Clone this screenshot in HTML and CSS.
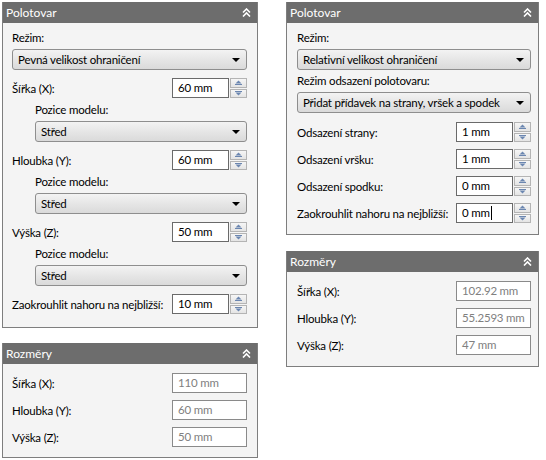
FILE: index.html
```html
<!DOCTYPE html>
<html lang="cs">
<head>
<meta charset="utf-8">
<link rel="stylesheet" href="styles.css">
</head>
<body>
<div class="page">
  <div class="col col-left">
    <section class="panel">
      <header class="ph"><span>Polotovar</span><svg class="chev" width="9" height="9" viewBox="0 0 9 9"><polyline points="1,4.5 4.5,1 8,4.5" /><polyline points="1,8.5 4.5,5 8,8.5" /></svg></header>
      <div class="pb">
        <div class="lbl">Režim:</div>
        <div class="combo"><span>Pevná velikost ohraničení</span><i class="arr"></i></div>
        <div class="row"><span>Šířka (X):</span><div class="spin"><div class="tb">60 mm</div><div class="btns"><b class="up"><svg width="7" height="5" viewBox="0 0 7 5"><path d="M0.5 3.5 L3.5 0.5 L6.5 3.5 Z"/><rect x="0" y="4" width="7" height="1"/></svg></b><b class="dn"><svg width="7" height="5" viewBox="0 0 7 5"><rect x="0" y="0" width="7" height="1"/><path d="M0.5 1.5 L3.5 4.5 L6.5 1.5 Z"/></svg></b></div></div></div>
        <div class="lbl ind">Pozice modelu:</div>
        <div class="combo ind"><span>Střed</span><i class="arr"></i></div>
        <div class="row"><span>Hloubka (Y):</span><div class="spin"><div class="tb">60 mm</div><div class="btns"><b class="up"><svg width="7" height="5" viewBox="0 0 7 5"><path d="M0.5 3.5 L3.5 0.5 L6.5 3.5 Z"/><rect x="0" y="4" width="7" height="1"/></svg></b><b class="dn"><svg width="7" height="5" viewBox="0 0 7 5"><rect x="0" y="0" width="7" height="1"/><path d="M0.5 1.5 L3.5 4.5 L6.5 1.5 Z"/></svg></b></div></div></div>
        <div class="lbl ind">Pozice modelu:</div>
        <div class="combo ind"><span>Střed</span><i class="arr"></i></div>
        <div class="row"><span>Výška (Z):</span><div class="spin"><div class="tb">50 mm</div><div class="btns"><b class="up"><svg width="7" height="5" viewBox="0 0 7 5"><path d="M0.5 3.5 L3.5 0.5 L6.5 3.5 Z"/><rect x="0" y="4" width="7" height="1"/></svg></b><b class="dn"><svg width="7" height="5" viewBox="0 0 7 5"><rect x="0" y="0" width="7" height="1"/><path d="M0.5 1.5 L3.5 4.5 L6.5 1.5 Z"/></svg></b></div></div></div>
        <div class="lbl ind">Pozice modelu:</div>
        <div class="combo ind"><span>Střed</span><i class="arr"></i></div>
        <div class="row"><span>Zaokrouhlit nahoru na nejbližší:</span><div class="spin"><div class="tb">10 mm</div><div class="btns"><b class="up"><svg width="7" height="5" viewBox="0 0 7 5"><path d="M0.5 3.5 L3.5 0.5 L6.5 3.5 Z"/><rect x="0" y="4" width="7" height="1"/></svg></b><b class="dn"><svg width="7" height="5" viewBox="0 0 7 5"><rect x="0" y="0" width="7" height="1"/><path d="M0.5 1.5 L3.5 4.5 L6.5 1.5 Z"/></svg></b></div></div></div>
      </div>
    </section>
    <section class="panel">
      <header class="ph"><span>Rozměry</span><svg class="chev" width="9" height="9" viewBox="0 0 9 9"><polyline points="1,4.5 4.5,1 8,4.5" /><polyline points="1,8.5 4.5,5 8,8.5" /></svg></header>
      <div class="pb dims">
        <div class="drow"><span>Šířka (X):</span><div class="ro">110 mm</div></div>
        <div class="drow"><span>Hloubka (Y):</span><div class="ro">60 mm</div></div>
        <div class="drow"><span>Výška (Z):</span><div class="ro">50 mm</div></div>
      </div>
    </section>
  </div>
  <div class="col col-right">
    <section class="panel">
      <header class="ph"><span>Polotovar</span><svg class="chev" width="9" height="9" viewBox="0 0 9 9"><polyline points="1,4.5 4.5,1 8,4.5" /><polyline points="1,8.5 4.5,5 8,8.5" /></svg></header>
      <div class="pb pr">
        <div class="lbl">Režim:</div>
        <div class="combo"><span>Relativní velikost ohraničení</span><i class="arr"></i></div>
        <div class="lbl">Režim odsazení polotovaru:</div>
        <div class="combo"><span>Přidat přídavek na strany, vršek a spodek</span><i class="arr"></i></div>
        <div class="row"><span>Odsazení strany:</span><div class="spin"><div class="tb">1 mm</div><div class="btns"><b class="up"><svg width="7" height="5" viewBox="0 0 7 5"><path d="M0.5 3.5 L3.5 0.5 L6.5 3.5 Z"/><rect x="0" y="4" width="7" height="1"/></svg></b><b class="dn"><svg width="7" height="5" viewBox="0 0 7 5"><rect x="0" y="0" width="7" height="1"/><path d="M0.5 1.5 L3.5 4.5 L6.5 1.5 Z"/></svg></b></div></div></div>
        <div class="row"><span>Odsazení vršku:</span><div class="spin"><div class="tb">1 mm</div><div class="btns"><b class="up"><svg width="7" height="5" viewBox="0 0 7 5"><path d="M0.5 3.5 L3.5 0.5 L6.5 3.5 Z"/><rect x="0" y="4" width="7" height="1"/></svg></b><b class="dn"><svg width="7" height="5" viewBox="0 0 7 5"><rect x="0" y="0" width="7" height="1"/><path d="M0.5 1.5 L3.5 4.5 L6.5 1.5 Z"/></svg></b></div></div></div>
        <div class="row"><span>Odsazení spodku:</span><div class="spin"><div class="tb">0 mm</div><div class="btns"><b class="up"><svg width="7" height="5" viewBox="0 0 7 5"><path d="M0.5 3.5 L3.5 0.5 L6.5 3.5 Z"/><rect x="0" y="4" width="7" height="1"/></svg></b><b class="dn"><svg width="7" height="5" viewBox="0 0 7 5"><rect x="0" y="0" width="7" height="1"/><path d="M0.5 1.5 L3.5 4.5 L6.5 1.5 Z"/></svg></b></div></div></div>
        <div class="row"><span>Zaokrouhlit nahoru na nejbližší:</span><div class="spin"><div class="tb focus">0 mm<i class="caret"></i></div><div class="btns"><b class="up"><svg width="7" height="5" viewBox="0 0 7 5"><path d="M0.5 3.5 L3.5 0.5 L6.5 3.5 Z"/><rect x="0" y="4" width="7" height="1"/></svg></b><b class="dn"><svg width="7" height="5" viewBox="0 0 7 5"><rect x="0" y="0" width="7" height="1"/><path d="M0.5 1.5 L3.5 4.5 L6.5 1.5 Z"/></svg></b></div></div></div>
      </div>
    </section>
    <section class="panel">
      <header class="ph"><span>Rozměry</span><svg class="chev" width="9" height="9" viewBox="0 0 9 9"><polyline points="1,4.5 4.5,1 8,4.5" /><polyline points="1,8.5 4.5,5 8,8.5" /></svg></header>
      <div class="pb dims pr">
        <div class="drow"><span>Šířka (X):</span><div class="ro">102.92 mm</div></div>
        <div class="drow"><span>Hloubka (Y):</span><div class="ro">55.2593 mm</div></div>
        <div class="drow"><span>Výška (Z):</span><div class="ro">47 mm</div></div>
      </div>
    </section>
  </div>
</div>
</body>
</html>
```

FILE: styles.css
```css
* { box-sizing: border-box; }
body {
  margin: 0;
  background: #fff;
  color: #000;
  font-family: Lato, "Noto Sans", sans-serif;
  font-size: 11.5px;
  letter-spacing: -0.2px;
  white-space: nowrap;
}
.page {
  display: flex;
  align-items: flex-start;
  gap: 28px;
  padding: 2px 0 0 2px;
}
.col {
  display: flex;
  flex-direction: column;
  gap: 15px;
}
.col-left { width: 256px; }
.col-right { width: 253px; gap: 16px; }
.panel {
  border: 1px solid #7e7e7e;
  border-top: 0;
  background: #f4f4f4;
}
.ph {
  height: 21px;
  background: #6d6d6d;
  color: #fff;
  font-size: 12px;
  letter-spacing: 0;
  display: flex;
  align-items: center;
  justify-content: space-between;
  padding: 0 6px 0 3px;
}
.chev polyline {
  fill: none;
  stroke: #fff;
  stroke-width: 1.6;
}
.pb {
  padding: 4px 10px 13px 9px;
}
.pb.pr { padding-left: 10px; padding-right: 7px; padding-bottom: 11px; }
.lbl {
  height: 22px;
  line-height: 22px;
}
.row + .lbl { margin-top: 1px; }
.ind { margin-left: 23px; }
.combo {
  height: 21px;
  border: 1px solid #8e8e8e;
  border-radius: 3px;
  background: linear-gradient(#f3f3f3, #e6e6e6 50%, #dadada);
  display: flex;
  align-items: center;
  justify-content: space-between;
  padding: 0 6px 0 5px;
}
.arr {
  width: 0;
  height: 0;
  border-left: 4px solid transparent;
  border-right: 4px solid transparent;
  border-top: 4px solid #000;
}
.row {
  display: flex;
  align-items: center;
  justify-content: space-between;
  height: 20px;
  margin-top: 8px;
}
.pr .row { margin-top: 7px; }
.pr .combo + .row { margin-top: 9px; }
.spin {
  display: flex;
  flex-shrink: 0;
  width: 75px;
  height: 20px;
}
.tb {
  width: 57px;
  height: 20px;
  border: 1px solid #6a6a6a;
  background: #fff;
  padding-left: 5px;
  line-height: 18px;
  display: flex;
  align-items: center;
}
.caret {
  width: 1px;
  height: 14px;
  background: #000;
  margin-left: 1px;
}
.btns {
  width: 17px;
  margin-left: 1px;
  display: flex;
  flex-direction: column;
  gap: 1px;
}
.btns b {
  flex: 1;
  border: 1px solid #b4b4b4;
  background: linear-gradient(#f6f6f6, #e4e4e4);
  display: flex;
  align-items: center;
  justify-content: center;
}
.btns svg { fill: #6b86b0; }
.dims { padding-top: 9px; padding-bottom: 10px; display: flex; flex-direction: column; gap: 7px; }
.drow {
  display: flex;
  align-items: center;
  justify-content: space-between;
  height: 20px;
}
.ro {
  width: 75px;
  flex-shrink: 0;
  height: 20px;
  border: 1px solid #8a8a8a;
  background: #fff;
  color: #808080;
  padding-left: 5px;
  line-height: 18px;
}
```
